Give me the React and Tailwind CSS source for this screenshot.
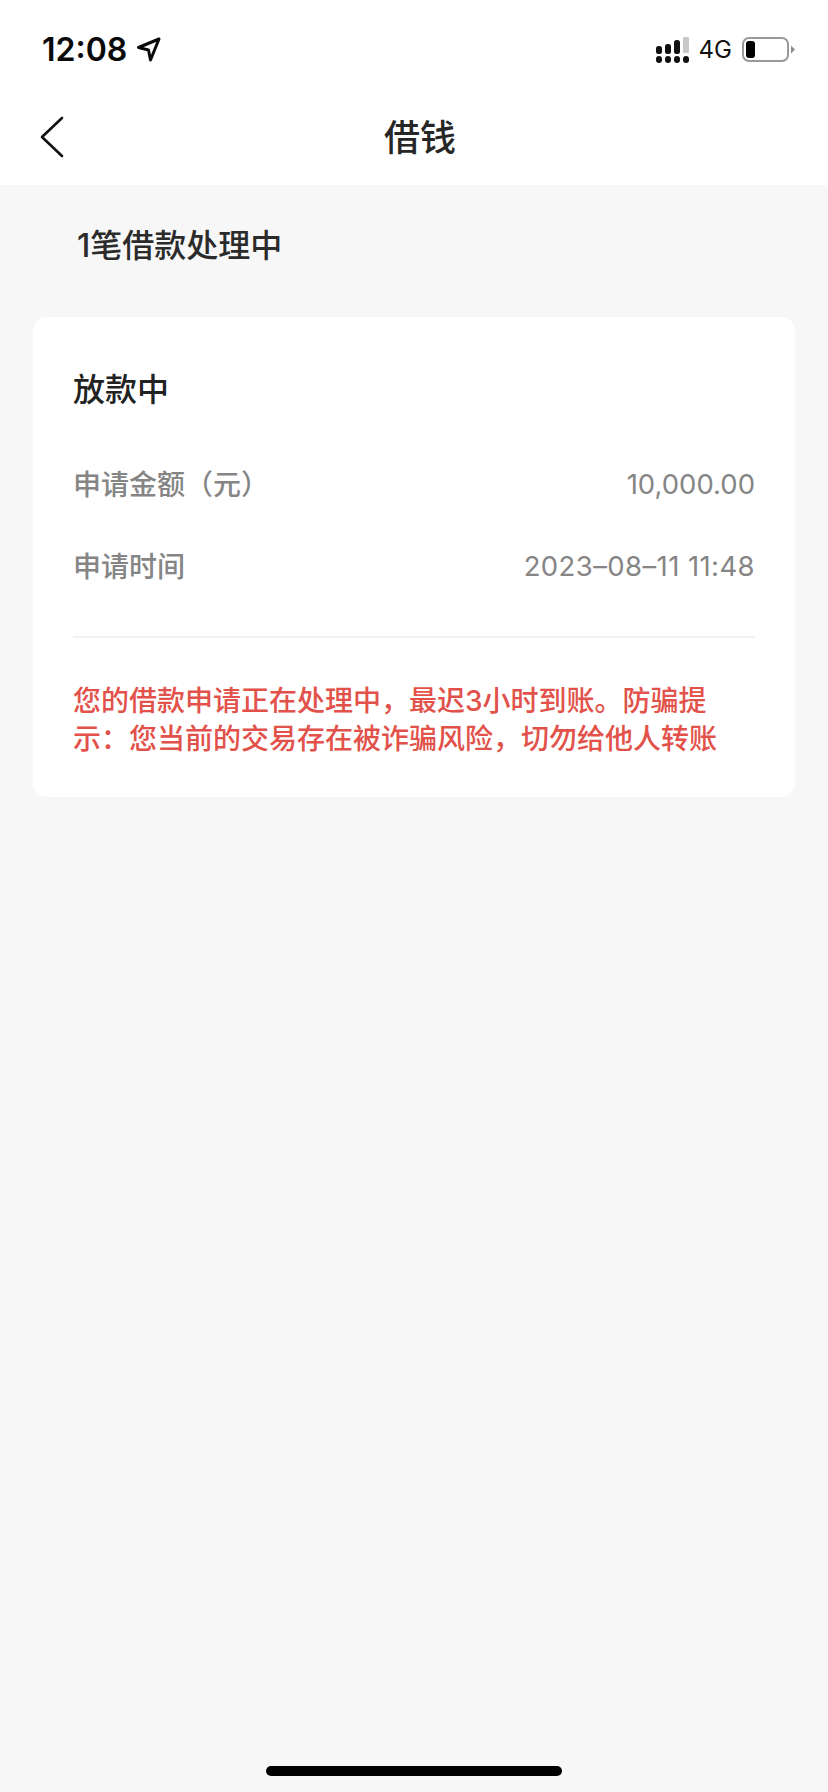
import React from "react";

const fontStack = "font-['Inter','Noto_Sans_CJK_SC',sans-serif]";

const SignalIcon = () => (
  <svg width="33" height="26" viewBox="0 0 33 26" fill="#111">
    <rect x="0" y="9" width="6" height="8" rx="2.5" />
    <rect x="9" y="7" width="6" height="10" rx="2.5" />
    <rect x="18" y="3" width="6" height="14" rx="2.5" />
    <rect x="27" y="0" width="6" height="16" rx="1" fill="#c9c9c9" />
    <rect x="0" y="19" width="6" height="7" rx="3" />
    <rect x="9" y="19" width="6" height="7" rx="3" />
    <rect x="18" y="19" width="6" height="7" rx="3" />
    <rect x="27" y="19" width="6" height="7" rx="3" />
  </svg>
);

const BatteryIcon = () => (
  <svg width="54" height="25" viewBox="0 0 54 25">
    <rect x="1" y="1" width="45" height="23" rx="6" fill="none" stroke="#999" strokeWidth="2" />
    <rect x="4" y="4" width="9" height="17" rx="3" fill="#000" />
    <path d="M49 8.5 L53 12.5 L49 16.5 Z" fill="#8c8c8c" />
  </svg>
);

const StatusBar = () => (
  <div className="flex h-[87px] items-center justify-between pl-[42px] pr-[32px] pt-[12px]">
    <div className="flex items-center gap-[9px]">
      <span className="text-[32px] leading-none font-semibold text-[#0a0a0a]">12:08</span>
      <svg width="25" height="25" viewBox="0 0 25 25" fill="none">
        <path d="M23 2 L2.5 10.5 L12.5 13 L14.5 23 Z" stroke="#0a0a0a" strokeWidth="3" strokeLinejoin="round" />
      </svg>
    </div>
    <div className="flex items-center gap-[10px]">
      <SignalIcon />
      <span className="text-[24px] leading-none text-[#111]">4G</span>
      <BatteryIcon />
    </div>
  </div>
);

const InfoRow = ({ label, value, valueClass }) => (
  <div className="flex h-[82px] items-center justify-between text-[28px] text-[#858585]">
    <span className="font-medium">{label}</span>
    <span className={`text-[27.5px] ${valueClass}`}>{value}</span>
  </div>
);

export default function App() {
  return (
    <div className={`flex min-h-[1792px] flex-col bg-[#f7f7f7] ${fontStack}`}>
      {/* header */}
      <div className="bg-white">
        <StatusBar />
        <div className="relative flex h-[98px] items-center justify-center pl-[12px] pt-[4px]">
          <svg className="absolute left-[40px] top-[29px]" width="24" height="42" viewBox="0 0 24 42" fill="none">
            <path d="M22 2 L2 21 L22 40" stroke="#111" strokeWidth="2.6" strokeLinecap="round" strokeLinejoin="round" />
          </svg>
          <span className="text-[36px] font-medium text-[#262626]">借钱</span>
        </div>
      </div>

      <div className="flex flex-1 flex-col">
        <div className="flex h-[132px] items-center pb-[10px] pl-[77px] text-[32px] font-medium text-[#2b2b2b]">
          1笔借款处理中
        </div>

        {/* card */}
        <div className="mx-[33px] h-[480px] rounded-[14px] bg-white px-[40px] pt-[51px]">
          <div className="text-[32px] leading-[44px] font-medium text-[#222]">放款中</div>
          <div className="mt-[32px]">
            <InfoRow label="申请金额（元）" value="10,000.00" valueClass="" />
            <InfoRow label="申请时间" value="2023–08–11 11:48" valueClass="tracking-[0.4px]" />
          </div>
          <div className="mt-[28px] h-[2px] bg-[#f2f2f2]" />
          <p className="mt-[44px] text-[28px] leading-[38px] font-medium text-[#e2524a]">
            您的借款申请正在处理中，最迟3小时到账。防骗提示：您当前的交易存在被诈骗风险，切勿给他人转账
          </p>
        </div>

        <div className="mt-auto flex justify-center pb-[16px]">
          <div className="h-[10px] w-[296px] rounded-full bg-black" />
        </div>
      </div>
    </div>
  );
}
